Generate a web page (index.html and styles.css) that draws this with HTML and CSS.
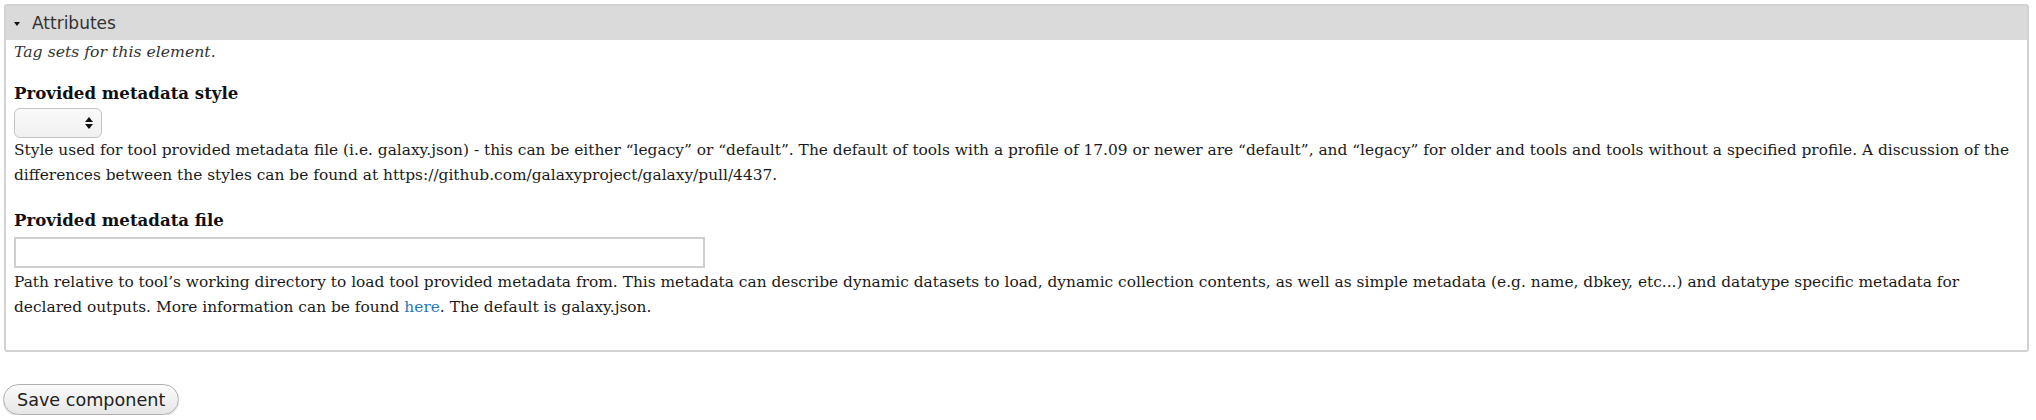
FILE: index.html
```html
<!DOCTYPE html>
<html>
<head>
<meta charset="utf-8">
<link rel="stylesheet" href="styles.css">
</head>
<body>
<div class="panel">
  <div class="panel-head"><span class="caret"></span><span class="panel-title">Attributes</span></div>
  <div class="panel-body">
    <p class="help-intro">Tag sets for this element.</p>
    <div class="field">
      <label class="field-label">Provided metadata style</label>
      <div class="select"><span class="arrows"><span class="up"></span><span class="down"></span></span></div>
      <p class="field-desc">Style used for tool provided metadata file (i.e. galaxy.json) - this can be either “legacy” or “default”. The default of tools with a profile of 17.09 or newer are “default”, and “legacy” for older and tools and tools without a specified profile. A discussion of the differences between the styles can be found at https://github.com/galaxyproject/galaxy/pull/4437.</p>
    </div>
    <div class="field">
      <label class="field-label">Provided metadata file</label>
      <div class="text-input"></div>
      <p class="field-desc desc-after-input">Path relative to tool’s working directory to load tool provided metadata from. This metadata can describe dynamic datasets to load, dynamic collection contents, as well as simple metadata (e.g. name, dbkey, etc...) and datatype specific metadata for declared outputs. More information can be found <a href="#">here</a>. The default is galaxy.json.</p>
    </div>
  </div>
</div>
<div class="actions"><button class="save-btn">Save component</button></div>
</body>
</html>
```
FILE: styles.css
```css
html, body { margin: 0; padding: 0; background: #fff; }
body {
  padding: 4px 7px 0 4px;
  font-family: "DejaVu Serif", serif;
  font-size: 15.4px;
  color: #1a1a1a;
}
.panel {
  border: 2px solid #d2d2d2;
  border-radius: 3px;
  background: #fff;
}
.panel-head {
  height: 34px;
  background: #dadada;
  display: flex;
  align-items: center;
  padding-left: 4px;
}
.caret {
  width: 0; height: 0;
  border-left: 3.5px solid transparent;
  border-right: 3.5px solid transparent;
  border-top: 4px solid #111;
  margin: 2px 12px 0 4px;
}
.panel-title {
  font-family: "DejaVu Sans", sans-serif;
  font-size: 17px;
  color: #333;
}
.panel-body {
  padding: 1px 4px 30px 8px;
}
.help-intro {
  margin: 0;
  font-style: italic;
  font-size: 15.7px;
  color: #333;
  line-height: 22px;
}
.field { margin-top: 19px; display: flex; flex-direction: column; align-items: flex-start; }
.field + .field { margin-top: 21px; }
.field-label {
  font-weight: bold;
  font-size: 16.6px;
  line-height: 22px;
  color: #111;
}
.select {
  margin-top: 4px;
  width: 86px; height: 28px;
  border: 1px solid #c4c4c4;
  border-radius: 6px;
  background: linear-gradient(#fafafa, #f0f0f0);
  display: flex; justify-content: flex-end; align-items: center;
}
.arrows { display: flex; flex-direction: column; gap: 2px; margin-right: 8px; }
.up { width: 0; height: 0; border-left: 4px solid transparent; border-right: 4px solid transparent; border-bottom: 5px solid #111; }
.down { width: 0; height: 0; border-left: 4px solid transparent; border-right: 4px solid transparent; border-top: 5px solid #111; }
.text-input {
  margin-top: 6px;
  width: 687px; height: 27px;
  border: 2px solid #cfcfcf;
  background: #fff;
}
.field-desc {
  margin: 0;
  line-height: 25px;
  align-self: stretch;
}
.desc-after-input { margin-top: 2px; }
.field-desc a { color: #2778b8; text-decoration: none; }
.actions { margin-top: 32px; }
.save-btn {
  font-family: "DejaVu Sans", sans-serif;
  font-size: 17.6px;
  color: #222;
  height: 31px;
  padding: 0 13px;
  margin-left: -1px;
  border: 1px solid #b0b0b0;
  border-radius: 16px;
  background: linear-gradient(#fbfbfb, #e6e6e6);
  box-shadow: 0 1px 1px rgba(0,0,0,0.15);
}
```
